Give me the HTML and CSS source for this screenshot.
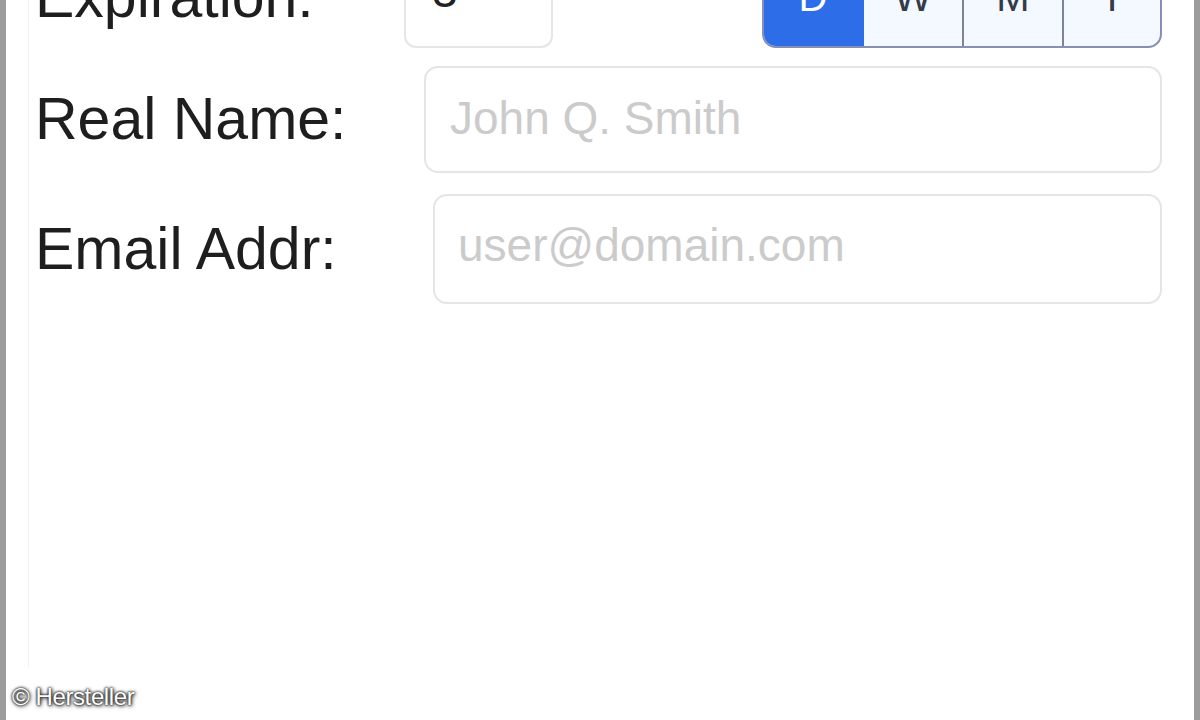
FILE: index.html
```html
<!DOCTYPE html>
<html lang="en">
<head>
<meta charset="utf-8">
<title>Account Settings</title>
<link rel="stylesheet" href="styles.css">
</head>
<body>
<div class="frame">
  <div class="inner">
    <form class="form">
      <div class="row row-exp">
        <label class="label label-exp">Expiration:</label>
        <div class="exp-fields">
          <div class="numbox">3</div>
          <div class="seg">
            <span class="seg-item active">D</span>
            <span class="seg-item">W</span>
            <span class="seg-item">M</span>
            <span class="seg-item last">Y</span>
          </div>
        </div>
      </div>
      <div class="row row-name">
        <label class="label" for="rn">Real Name:</label>
        <input class="field" id="rn" type="text" placeholder="John Q. Smith">
      </div>
      <div class="row row-mail">
        <label class="label" for="em">Email Addr:</label>
        <input class="field field-mail" id="em" type="text" placeholder="user@domain.com">
      </div>
    </form>
  </div>
  <div class="credit">© Hersteller</div>
</div>
</body>
</html>
```

FILE: styles.css
```css
html, body {
  margin: 0;
  padding: 0;
  width: 1200px;
  height: 720px;
  overflow: hidden;
  background: #ffffff;
  font-family: "Liberation Sans", Arial, sans-serif;
}

.frame {
  position: relative;
  box-sizing: border-box;
  width: 1200px;
  height: 720px;
  border-left: 6px solid #9c9c9c;
  border-right: 6px solid #9c9c9c;
  background: #ffffff;
  overflow: hidden;
}

.inner {
  box-sizing: border-box;
  height: 100%;
  margin-left: 22px;
  border-left: 1px solid #f3f3f3;
  padding-left: 6px;
  padding-right: 32px;
}

.form {
  margin-top: -52px;
  display: flex;
  flex-direction: column;
}

.row {
  display: grid;
  grid-template-columns: 389px 1fr;
  align-items: center;
}

.row-exp {
  height: 100px;
  align-items: end;
}

.row-name {
  height: 107px;
  margin-top: 18px;
}

.row-mail {
  height: 110px;
  margin-top: 21px;
}

.label {
  font-size: 59px;
  line-height: 1;
  color: #1e1e1e;
  white-space: nowrap;
}

.label-exp {
  padding-bottom: 21px;
}

.exp-fields {
  display: flex;
  justify-content: space-between;
  align-items: flex-end;
  height: 100px;
}

.numbox {
  box-sizing: border-box;
  width: 149px;
  height: 100px;
  margin-left: -20px;
  border: 2px solid #e6e6e6;
  border-radius: 12px;
  font-size: 46px;
  line-height: 46px;
  color: #222222;
  padding-left: 26px;
  padding-top: 18px;
}

.seg {
  box-sizing: border-box;
  display: flex;
  width: 400px;
  height: 100px;
  border: 2px solid #8590b4;
  border-radius: 14px;
  overflow: hidden;
  background: #f4f8ff;
}

.seg-item {
  box-sizing: border-box;
  width: 100px;
  display: flex;
  justify-content: center;
  align-items: flex-end;
  padding-bottom: 29px;
  font-size: 40px;
  line-height: 40px;
  color: #333a48;
  border-right: 2px solid #7c8498;
}

.seg-item.active {
  background: #2e6de8;
  color: #ffffff;
  border-right-color: #2e6de8;
}

.seg-item.last {
  width: 96px;
  border-right: none;
}

.field {
  box-sizing: border-box;
  width: 100%;
  height: 100%;
  border: 2px solid #e5e5e5;
  border-radius: 14px;
  background: #ffffff;
  padding: 0 0 4px 24px;
  font-family: "Liberation Sans", Arial, sans-serif;
  font-size: 46px;
  color: #222222;
  outline: none;
}

.field::placeholder {
  color: #cbcbcb;
}

.field-mail {
  margin-left: 9px;
  width: calc(100% - 9px);
  padding-left: 23px;
  padding-bottom: 8px;
}

.credit {
  position: absolute;
  left: 6px;
  bottom: 9px;
  font-family: "Liberation Sans", Arial, sans-serif;
  font-size: 24px;
  letter-spacing: -0.4px;
  color: #ffffff;
  text-shadow: 0 0 2px #222, 0 0 3px #222, 1px 1px 4px #000;
}
```
